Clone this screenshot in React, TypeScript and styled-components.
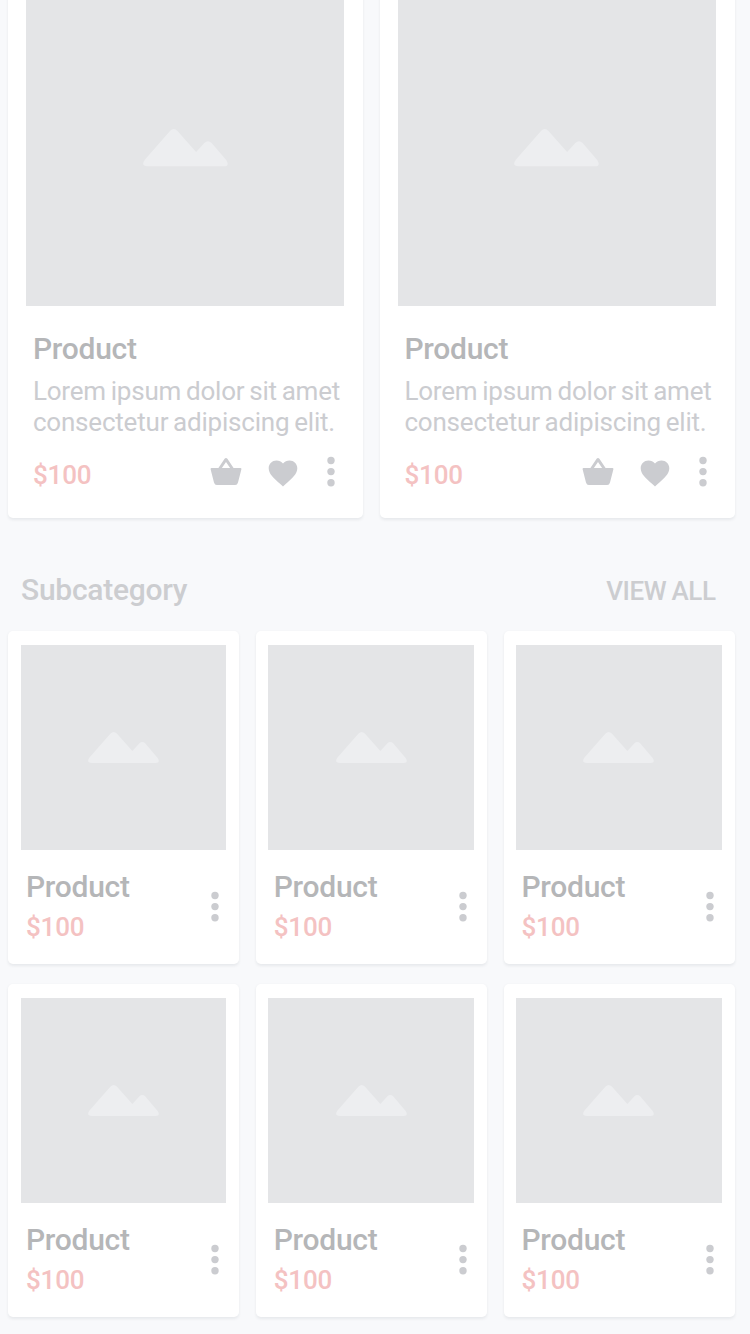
import React from "react";
import styled, { createGlobalStyle } from "styled-components";

const GlobalStyle = createGlobalStyle`
  * { box-sizing: border-box; }
  body {
    margin: 0;
    background: #f8f9fb;
    font-family: Roboto, "Liberation Sans", sans-serif;
    overflow: hidden;
  }
`;

const Page = styled.main`
  height: 1334px;
  padding: 0 15.5px 0 8px;
  overflow: hidden;
`;

const FeaturedGrid = styled.section`
  display: grid;
  grid-template-columns: repeat(2, 355px);
  justify-content: space-between;
  margin-top: -30px;
`;

const Card = styled.article`
  background: #fff;
  border-radius: 5px;
  box-shadow: 0 1.5px 3px rgba(40, 50, 70, 0.08);
`;

const FeaturedCard = styled(Card)`
  height: 548px;
  padding: 18.4px 18.4px 0;
`;

const CompactCard = styled(Card)`
  height: 333px;
  padding: 13.5px 12.6px 0;
`;

const Picture = styled.div<{ $width: number; $height: number }>`
  display: flex;
  align-items: center;
  justify-content: center;
  width: ${(p) => p.$width}px;
  height: ${(p) => p.$height}px;
  background: #e4e5e7;
`;

const FeaturedBody = styled.div`
  padding: 22.6px 0 0 6.5px;
`;

const Title = styled.h3`
  margin: 0;
  font-size: 30px;
  font-weight: 500;
  line-height: 40px;
  letter-spacing: -0.25px;
  color: #b5b6b8;
`;

const Description = styled.p`
  margin: 7px 0 0;
  font-size: 26px;
  line-height: 31px;
  letter-spacing: -0.2px;
  word-spacing: -1.45px;
  white-space: nowrap;
  color: #cbccd0;
`;

const Price = styled.span`
  display: block;
  font-size: 26px;
  font-weight: 500;
  line-height: 40px;
  letter-spacing: -0.15px;
  color: #f4c2c2;
`;

const PriceRow = styled.div`
  display: flex;
  justify-content: space-between;
  margin-top: 17px;
`;

const Actions = styled.div`
  display: flex;
  align-items: flex-start;
  height: 35px;
  padding: 1.2px 9.4px 0 0;
`;

const IconButton = styled.button<{ $gap?: number }>`
  display: block;
  margin: 0 0 0 ${(p) => p.$gap ?? 0}px;
  padding: 0;
  border: 0;
  background: none;
  color: #cbccd0;
  svg { display: block; }
`;

const SectionHeader = styled.header`
  display: flex;
  justify-content: space-between;
  height: 113.2px;
  padding: 51.5px 19px 0 13px;
  color: #cccdd0;
`;

const SectionTitle = styled.h2`
  margin: 0;
  font-size: 30px;
  font-weight: 500;
  line-height: 40px;
  letter-spacing: -0.27px;
`;

const ViewAll = styled.a`
  padding-top: 1px;
  font-size: 26px;
  font-weight: 500;
  line-height: 40px;
  letter-spacing: -0.45px;
  word-spacing: -0.6px;
`;

const CompactGrid = styled.section`
  display: grid;
  grid-template-columns: repeat(3, 231px);
  justify-content: space-between;
  row-gap: 20px;
`;

const CompactBody = styled.div`
  display: flex;
  justify-content: space-between;
  padding: 17px 7.6px 0 5.3px;
`;

const CompactMenu = styled.div`
  padding-top: 24px;
`;

const Mountain = ({ width }: { width: number }) => (
  <svg width={width} height={width * 0.46} viewBox="0 0 85 39" fill="#edeef0">
    <path d="M1.8 31.8 L27 3 Q30.7 -1 34.5 3 L53.1 24 L61.6 14.6 Q65 11.6 68.4 14.6 L83.4 32.2 Q87 38.2 81 38.2 L4.5 38.2 Q-2.5 38 1.8 31.8Z" />
  </svg>
);

const BasketIcon = () => (
  <svg width="32" height="34" viewBox="0 0 32 34" fill="currentColor">
    <path d="M1.6 12 H8.4 L14.6 2.7 Q16 1.1 17.4 2.7 L23.6 12 H30.4 Q31.6 12 31.4 13.2 L28 26.5 Q27.3 29 25.2 29 H6.8 Q4.7 29 4 26.5 L0.6 13.2 Q0.4 12 1.6 12Z M11.9 12 H20.1 L16 6Z" />
  </svg>
);

const HeartIcon = () => (
  <svg width="30" height="34" viewBox="0 0 30 34" fill="currentColor">
    <path d="M15 30.4 L12.9 28.5 C5.5 21.8 0.7 17.9 0.7 12.2 C0.7 7.8 4.2 4.5 8.5 4.5 C11 4.5 13.4 5.7 15 7.5 C16.6 5.7 19 4.5 21.5 4.5 C25.8 4.5 29.3 7.8 29.3 12.2 C29.3 17.9 24.5 21.8 17.1 28.5Z" />
  </svg>
);

const DotsIcon = () => (
  <svg width="8" height="31" viewBox="0 0 8 31" fill="currentColor">
    <circle cx="4" cy="4.5" r="3.7" />
    <circle cx="4" cy="15.6" r="3.7" />
    <circle cx="4" cy="26.7" r="3.7" />
  </svg>
);

const FeaturedProduct = () => (
  <FeaturedCard>
    <Picture $width={318} $height={318}>
      <Mountain width={85} />
    </Picture>
    <FeaturedBody>
      <Title>Product</Title>
      <Description>
        Lorem ipsum dolor sit amet
        <br />
        consectetur adipiscing elit.
      </Description>
      <PriceRow>
        <Price>$100</Price>
        <Actions>
          <IconButton aria-label="Add to basket">
            <BasketIcon />
          </IconButton>
          <IconButton $gap={26} aria-label="Favourite">
            <HeartIcon />
          </IconButton>
          <IconButton $gap={29} aria-label="More">
            <DotsIcon />
          </IconButton>
        </Actions>
      </PriceRow>
    </FeaturedBody>
  </FeaturedCard>
);

const CompactProduct = () => (
  <CompactCard>
    <Picture $width={205.6} $height={205.2}>
      <Mountain width={71} />
    </Picture>
    <CompactBody>
      <div>
        <Title>Product</Title>
        <Price>$100</Price>
      </div>
      <CompactMenu>
        <IconButton aria-label="More">
          <DotsIcon />
        </IconButton>
      </CompactMenu>
    </CompactBody>
  </CompactCard>
);

export default function App() {
  return (
    <>
      <GlobalStyle />
      <Page>
        <FeaturedGrid>
          {[0, 1].map((i) => (
            <FeaturedProduct key={i} />
          ))}
        </FeaturedGrid>
        <SectionHeader>
          <SectionTitle>Subcategory</SectionTitle>
          <ViewAll>VIEW ALL</ViewAll>
        </SectionHeader>
        <CompactGrid>
          {[0, 1, 2, 3, 4, 5].map((i) => (
            <CompactProduct key={i} />
          ))}
        </CompactGrid>
      </Page>
    </>
  );
}
